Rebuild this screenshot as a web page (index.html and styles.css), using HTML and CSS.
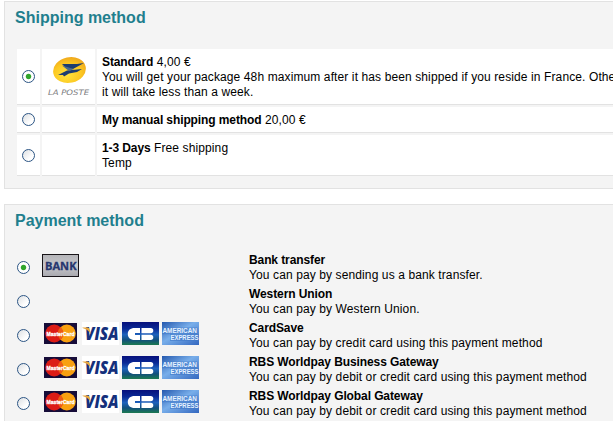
FILE: index.html
```html
<!DOCTYPE html>
<html lang="en">
<head>
  <meta charset="UTF-8" />
  <title>Shipping and payment</title>
  <link rel="stylesheet" href="styles.css">
</head>
<body>
  <svg width="0" height="0" class="defs">
    <defs>
      <linearGradient id="cbBg" x1="0" y1="0" x2="0" y2="1">
        <stop offset="0" stop-color="#06107c" />
        <stop offset="0.3" stop-color="#0a2a96" />
        <stop offset="0.55" stop-color="#1e62bc" />
        <stop offset="0.78" stop-color="#12507c" />
        <stop offset="1" stop-color="#1c7a50" />
      </linearGradient>
      <linearGradient id="amexBg" x1="0" y1="0" x2="1" y2="1">
        <stop offset="0" stop-color="#2458ae" />
        <stop offset="0.45" stop-color="#78aeea" />
        <stop offset="1" stop-color="#3468c0" />
      </linearGradient>
      <linearGradient id="bankBg" x1="0" y1="0" x2="0" y2="1">
        <stop offset="0" stop-color="#b4b4b8" />
        <stop offset="0.5" stop-color="#c8c8cc" />
        <stop offset="1" stop-color="#a8a8ae" />
      </linearGradient>
      <radialGradient id="posteBg" cx="0.4" cy="0.65" r="0.7">
        <stop offset="0" stop-color="#ffe43c" />
        <stop offset="0.6" stop-color="#fcc822" />
        <stop offset="1" stop-color="#eea41c" />
      </radialGradient>
      <symbol id="mastercard" viewBox="0 0 33 21">
        <rect width="33" height="21" fill="#160c38" />
        <circle cx="22.8" cy="10.5" r="9" fill="#f8a010" />
        <circle cx="10.2" cy="10.5" r="9" fill="#dc1c16" />
        <path d="M16.5 4 A9 9 0 0 1 16.5 17 A9 9 0 0 1 16.5 4Z" fill="#ee5c14" />
        <text x="2.5" y="13" textLength="28" lengthAdjust="spacingAndGlyphs" class="mc-text">MasterCard</text>
      </symbol>
      <symbol id="visa" viewBox="0 0 37 23">
        <rect width="37" height="23" fill="#fff" />
        <text x="3" y="18" textLength="33.5" lengthAdjust="spacingAndGlyphs" class="visa-text">VISA</text>
        <path d="M0.5 5.5h5.2q1.4 0 1.8 1.6l1.3 5.2q-2.5-4.8-8.3-6.3z" fill="#e6a63c" />
      </symbol>
      <symbol id="cb" viewBox="0 0 37 23">
        <rect width="37" height="23" fill="url(#cbBg)" />
        <path d="M18 11V6H12.5C8.5 6 5.8 8.2 5.8 12S8.5 18 12.5 18H18v-5h-5v-2z" fill="#fff" />
        <path d="M19.5 6h9.2a2.6 2.6 0 0 1 0 5.2h-9.2zM19.5 12.7h9.2a2.6 2.6 0 0 1 0 5.2h-9.2z" fill="#fff" />
      </symbol>
      <symbol id="amex" viewBox="0 0 37 23">
        <rect width="37" height="23" fill="url(#amexBg)" />
        <path d="M0 5.5h35.5v6.7H37v6.8H8v-6.8H0z" fill="#3f78c8" opacity="0.6" />
        <text x="0.5" y="11.2" textLength="34.5" lengthAdjust="spacingAndGlyphs" class="amex-text">AMERICAN</text>
        <text x="8.5" y="18.2" textLength="28" lengthAdjust="spacingAndGlyphs" class="amex-text">EXPRESS</text>
      </symbol>
    </defs>
  </svg>

  <div class="panel">
    <h2>Shipping method</h2>
    <table class="shipping">
      <tr>
        <td class="choice"><span class="radio checked"></span></td>
        <td class="logo">
          <svg width="43" height="44" viewBox="0 0 43 44">
            <ellipse cx="22.5" cy="15" rx="16.5" ry="12.8" transform="rotate(-12 22.5 15)" fill="url(#posteBg)" />
            <path d="M15 9h15l7-1-11 6h-6z" fill="#1c3c70" />
            <path d="M11 20l9-4.5 15-1.5-5 3-8 1.5-5 3-1-1.5z" fill="#1c3c70" />
            <path d="M15 10.5l12 3.5-5 2z" fill="#4a6a8c" />
            <text x="1" y="39.5" textLength="41" lengthAdjust="spacingAndGlyphs" class="poste-text">LA POSTE</text>
          </svg>
        </td>
        <td class="info"><b>Standard</b> 4,00 €<br>You will get your package 48h maximum after it has been shipped if you reside in France. Otherwise<br>it will take less than a week.</td>
      </tr>
      <tr>
        <td class="choice"><span class="radio"></span></td>
        <td class="logo"></td>
        <td class="info"><b>My manual shipping method</b> 20,00 €</td>
      </tr>
      <tr>
        <td class="choice"><span class="radio"></span></td>
        <td class="logo"></td>
        <td class="info"><b>1-3 Days</b> Free shipping<br>Temp</td>
      </tr>
    </table>
  </div>

  <div class="panel">
    <h2>Payment method</h2>
    <div class="payment">
      <div class="method">
        <span class="radio checked"></span>
        <div class="cards bank">
          <svg width="37" height="23" viewBox="0 0 37 23">
            <rect x="0.5" y="0.5" width="36" height="22" fill="url(#bankBg)" stroke="#181418" />
            <text x="3" y="15.5" textLength="31.5" lengthAdjust="spacingAndGlyphs" class="bank-text">BANK</text>
          </svg>
        </div>
        <div class="info"><b>Bank transfer</b><br>You can pay by sending us a bank transfer.</div>
      </div>
      <div class="method">
        <span class="radio"></span>
        <div class="cards"></div>
        <div class="info"><b>Western Union</b><br>You can pay by Western Union.</div>
      </div>
      <div class="method">
        <span class="radio"></span>
        <div class="cards">
          <svg class="mc"><use href="#mastercard" /></svg>
          <svg class="card"><use href="#visa" /></svg>
          <svg class="card"><use href="#cb" /></svg>
          <svg class="card"><use href="#amex" /></svg>
        </div>
        <div class="info"><b>CardSave</b><br>You can pay by credit card using this payment method</div>
      </div>
      <div class="method">
        <span class="radio"></span>
        <div class="cards">
          <svg class="mc"><use href="#mastercard" /></svg>
          <svg class="card"><use href="#visa" /></svg>
          <svg class="card"><use href="#cb" /></svg>
          <svg class="card"><use href="#amex" /></svg>
        </div>
        <div class="info"><b>RBS Worldpay Business Gateway</b><br>You can pay by debit or credit card using this payment method</div>
      </div>
      <div class="method">
        <span class="radio"></span>
        <div class="cards">
          <svg class="mc"><use href="#mastercard" /></svg>
          <svg class="card"><use href="#visa" /></svg>
          <svg class="card"><use href="#cb" /></svg>
          <svg class="card"><use href="#amex" /></svg>
        </div>
        <div class="info"><b>RBS Worldpay Global Gateway</b><br>You can pay by debit or credit card using this payment method</div>
      </div>
    </div>
  </div>
</body>
</html>
```
FILE: styles.css
```css
html {
  overflow: hidden;
}
body {
  margin: 0;
  padding: 1px 0 0 4px;
  background: #fff;
  color: #000;
  font-family: "Liberation Sans", Arial, sans-serif;
  font-size: 12px;
  line-height: 15px;
  height: 100vh;
  box-sizing: border-box;
  overflow: hidden;
}
.defs {
  display: block;
}
.panel {
  width: 760px;
  box-sizing: border-box;
  padding: 6px 10px 12px;
  margin-bottom: 15px;
  border: 1px solid #e2e2e2;
  background: #f4f4f4;
}
h2 {
  margin: 0;
  font-size: 16px;
  line-height: 20px;
  color: #1f7f8e;
}
b {
  letter-spacing: -0.1px;
}

/* shipping */
.shipping {
  width: 738px;
  margin-top: 19px;
  margin-bottom: -2px;
  border-collapse: separate;
  border-spacing: 2px;
}
.shipping td {
  padding: 5px;
  background: #fff;
  border-bottom: 1px solid #e2e2e2;
  vertical-align: middle;
}
.shipping .choice {
  width: 13px;
}
.shipping .logo {
  width: 43px;
  padding: 0 5px;
}
.shipping .logo svg {
  display: block;
}
.shipping .info {
  padding: 6px 5px 4px;
}
.info {
  letter-spacing: 0.11px;
  white-space: nowrap;
}
.radio {
  display: block;
  width: 13px;
  height: 13px;
  box-sizing: border-box;
  border: 1px solid #2c5584;
  border-radius: 50%;
  background: linear-gradient(135deg, #dcdfe2, #fff 70%);
}
.radio.checked {
  background: radial-gradient(circle, #2fa52c 0, #2fa52c 2.2px, #fff 3.2px);
}

/* payment */
.payment {
  margin-top: 19px;
}
.method {
  display: flex;
  align-items: center;
  height: 34px;
}
.method .radio {
  margin: 0 12px 0 2px;
}
.method .info {
  padding-top: 2px;
}
.cards {
  display: flex;
  align-items: center;
  gap: 3px;
  width: 207px;
  padding-left: 2px;
  margin-bottom: 3px;
  box-sizing: border-box;
}
.cards.bank {
  padding-left: 0;
}
.mc {
  width: 33px;
  height: 21px;
  margin-right: 2px;
}
.card {
  width: 37px;
  height: 23px;
}
.mc-text {
  font: bold 6px "Liberation Sans", sans-serif;
  fill: #fff;
  stroke: #fff;
  stroke-width: 0.3px;
}
.visa-text {
  font: italic 800 17.5px "Open Sans", sans-serif;
  fill: #14307c;
}
.amex-text {
  font: bold 7px "Liberation Sans", sans-serif;
  fill: #e6f2ff;
}
.bank-text {
  font: bold 11px "Open Sans", sans-serif;
  fill: #26366e;
  stroke: #26366e;
  stroke-width: 0.3px;
}
.poste-text {
  font: italic 7.5px "DejaVu Sans", sans-serif;
  fill: #7c7c80;
}
```
